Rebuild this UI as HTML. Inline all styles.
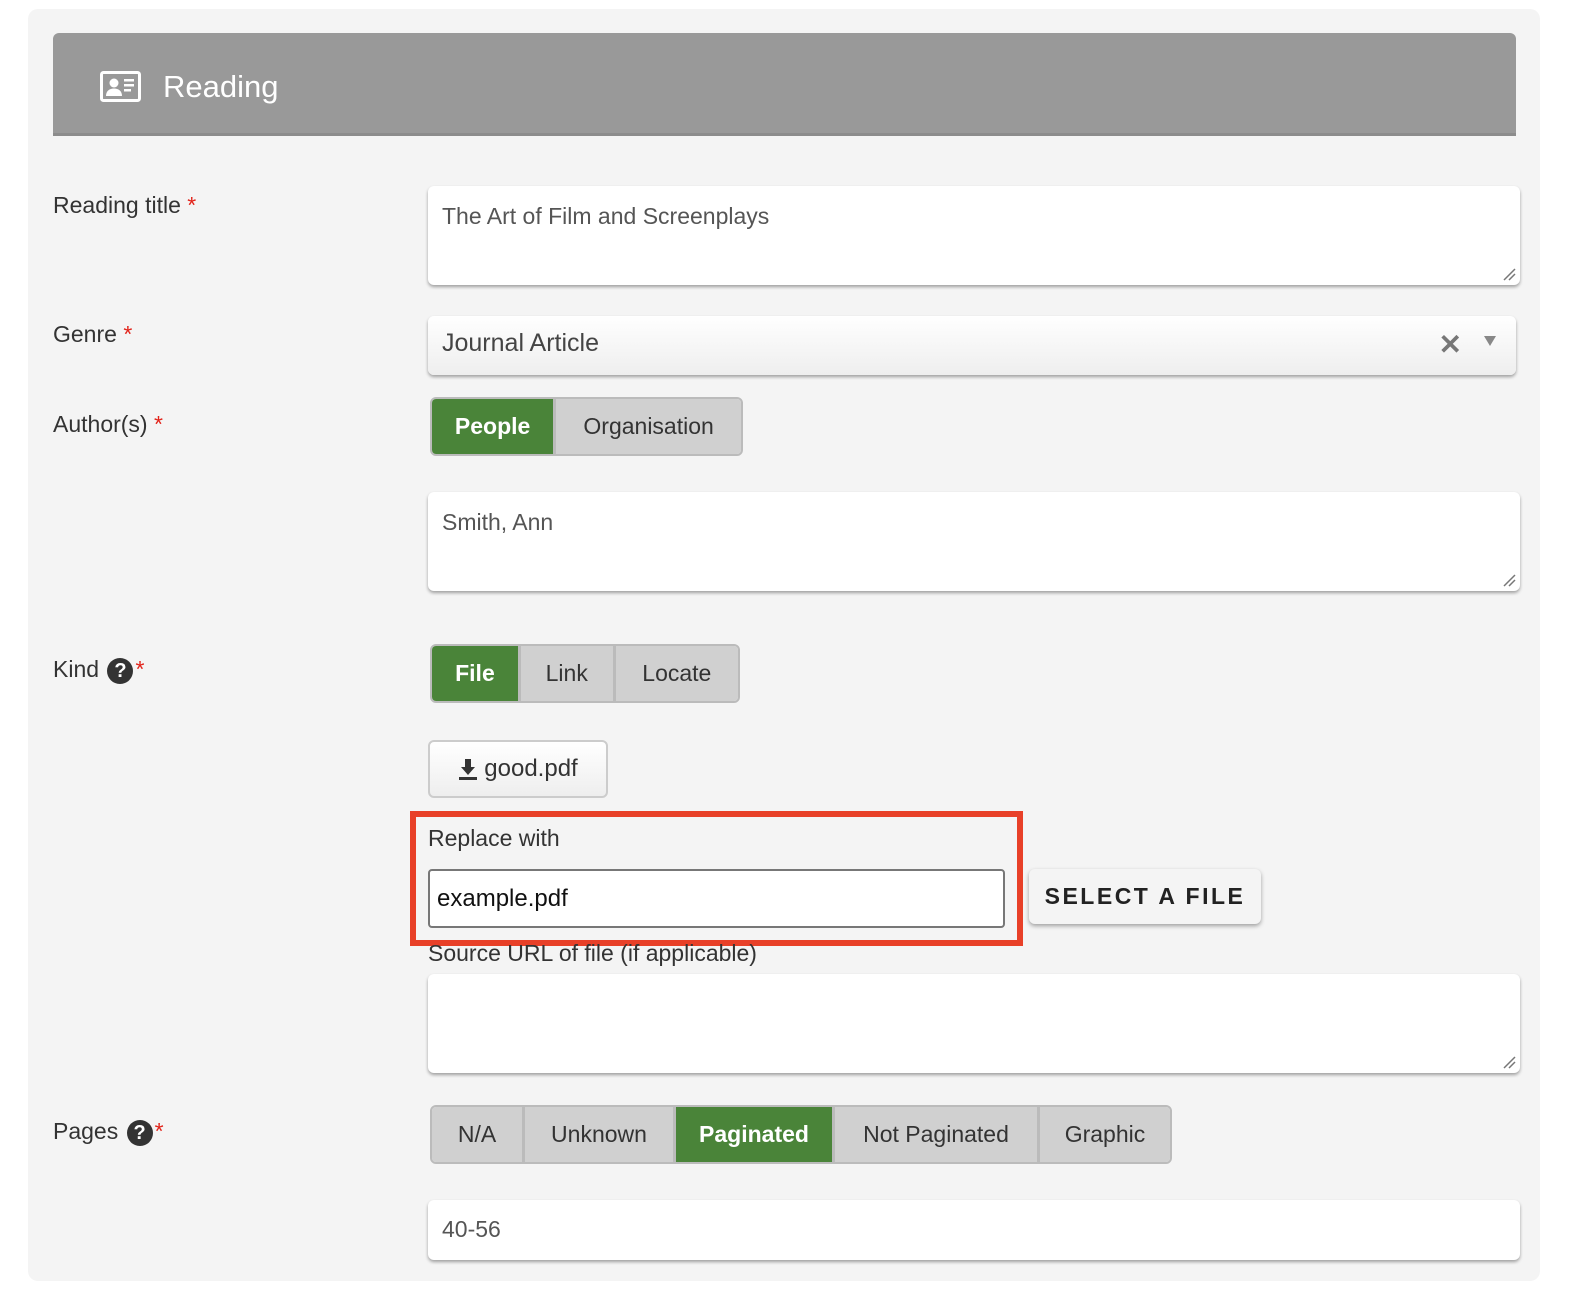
<!DOCTYPE html>
<html><head><style>
*{box-sizing:border-box;margin:0;padding:0}
body{width:1576px;height:1290px;background:#fff;font-family:"Liberation Sans",sans-serif;position:relative;overflow:hidden;color:#333}
.panel{position:absolute;left:28px;top:9px;width:1512px;height:1272px;background:#f4f4f4;border-radius:10px}
.hdr{position:absolute;left:53px;top:33px;width:1463px;height:103px;background:#999;border-radius:6px 6px 0 0;border-bottom:3px solid #8c8c8c}
.hdr span{position:absolute;left:110px;top:36px;color:#fff;font-size:31px}
.lbl{position:absolute;left:53px;font-size:23px;color:#333}
.star{color:#e2231a}
.box{position:absolute;background:#fff;border-radius:6px;box-shadow:0 2px 3px rgba(0,0,0,.35);font-size:23px;color:#555;padding:17px 14px}
.grip{position:absolute;right:4px;bottom:4px;width:14px;height:14px}
.seg{position:absolute;height:59px;display:flex;border:2px solid #bbb;border-radius:6px;overflow:hidden}
.seg div{background:#d0d0d0;font-size:23px;color:#333;display:flex;align-items:center;justify-content:center;border-right:3px solid #bbb}
.seg div:last-child{border-right:none}
.seg .on{background:#4a8439;color:#fff;font-weight:bold}
.q{display:inline-block;width:26px;height:26px;border-radius:50%;background:#333;color:#fff;font-size:20px;font-weight:bold;text-align:center;line-height:26px;vertical-align:middle;margin:0 2px}
</style></head><body>
<div class="panel"></div>
<div class="hdr">
<svg style="position:absolute;left:47px;top:38px" width="41" height="31" viewBox="0 0 41 31"><rect x="1.5" y="1.5" width="38" height="28" rx="2" fill="none" stroke="#fff" stroke-width="3"/><circle cx="14" cy="12" r="4.5" fill="#fff"/><path d="M6 25c0-5 3.5-7.5 8-7.5s8 2.5 8 7.5z" fill="#fff"/><rect x="24" y="8" width="10" height="2.5" fill="#fff"/><rect x="24" y="13" width="10" height="2.5" fill="#fff"/><rect x="24" y="18" width="7" height="2.5" fill="#fff"/></svg>
<span>Reading</span></div>

<div class="lbl" style="top:192px">Reading title <span class="star">*</span></div>
<div class="box" style="left:428px;top:186px;width:1092px;height:99px">The Art of Film and Screenplays<svg class="grip" viewBox="0 0 14 14"><path d="M2 13L13 2M7 13L13 7" stroke="#777" stroke-width="1.5"/></svg></div>

<div class="lbl" style="top:321px">Genre <span class="star">*</span></div>
<div class="box" style="left:428px;top:316px;width:1088px;height:59px;background:linear-gradient(#fff,#eee);font-size:25px;color:#444;padding:13px 14px">Journal Article
<span style="position:absolute;right:54px;top:12px;color:#777;font-size:28px;font-weight:bold">✕</span>
<span style="position:absolute;right:20px;top:20px;width:0;height:0;border-left:6px solid transparent;border-right:6px solid transparent;border-top:10px solid #888"></span></div>

<div class="lbl" style="top:411px">Author(s) <span class="star">*</span></div>
<div class="seg" style="left:430px;top:397px;width:313px"><div class="on" style="width:125px">People</div><div style="width:186px">Organisation</div></div>
<div class="box" style="left:428px;top:492px;width:1092px;height:99px">Smith, Ann<svg class="grip" viewBox="0 0 14 14"><path d="M2 13L13 2M7 13L13 7" stroke="#777" stroke-width="1.5"/></svg></div>

<div class="lbl" style="top:656px">Kind <span class="q">?</span><span class="star">*</span></div>
<div class="seg" style="left:430px;top:644px;width:310px"><div class="on" style="width:90px">File</div><div style="width:96px">Link</div><div style="width:124px">Locate</div></div>

<div style="position:absolute;left:428px;top:740px;width:180px;height:58px;border:2px solid #ccc;border-radius:6px;background:linear-gradient(#fff,#eee);font-size:24px;color:#333;display:flex;align-items:center;justify-content:center;gap:6px">
<svg width="20" height="24" viewBox="0 0 20 24"><path d="M7 2h6v8h4l-7 8-7-8h4z" fill="#333"/><rect x="1" y="20" width="18" height="3" fill="#333"/></svg>good.pdf</div>

<div style="position:absolute;left:410px;top:811px;width:613px;height:135px;border:6px solid #e84028"></div>
<div style="position:absolute;left:428px;top:825px;font-size:23px;color:#333">Replace with</div>
<div style="position:absolute;left:428px;top:869px;width:577px;height:59px;border:2px solid #777;border-radius:4px;background:#fff;font-size:24px;color:#111;padding:14px 7px">example.pdf</div>
<div style="position:absolute;left:1029px;top:869px;width:232px;height:55px;background:#f4f4f4;border-radius:6px;box-shadow:0 2px 4px rgba(0,0,0,.35);font-size:23px;font-weight:bold;letter-spacing:2.5px;color:#222;display:flex;align-items:center;justify-content:center">SELECT A FILE</div>
<div style="position:absolute;left:428px;top:940px;font-size:23px;color:#333">Source URL of file (if applicable)</div>
<div class="box" style="left:428px;top:974px;width:1092px;height:99px"><svg class="grip" viewBox="0 0 14 14"><path d="M2 13L13 2M7 13L13 7" stroke="#777" stroke-width="1.5"/></svg></div>

<div class="lbl" style="top:1118px">Pages <span class="q">?</span><span class="star">*</span></div>
<div class="seg" style="left:430px;top:1105px;width:742px"><div style="width:93px">N/A</div><div style="width:151px">Unknown</div><div class="on" style="width:159px">Paginated</div><div style="width:205px">Not Paginated</div><div style="width:130px">Graphic</div></div>
<div class="box" style="left:428px;top:1200px;width:1092px;height:60px;padding:16px 14px">40-56</div>
</body></html>
